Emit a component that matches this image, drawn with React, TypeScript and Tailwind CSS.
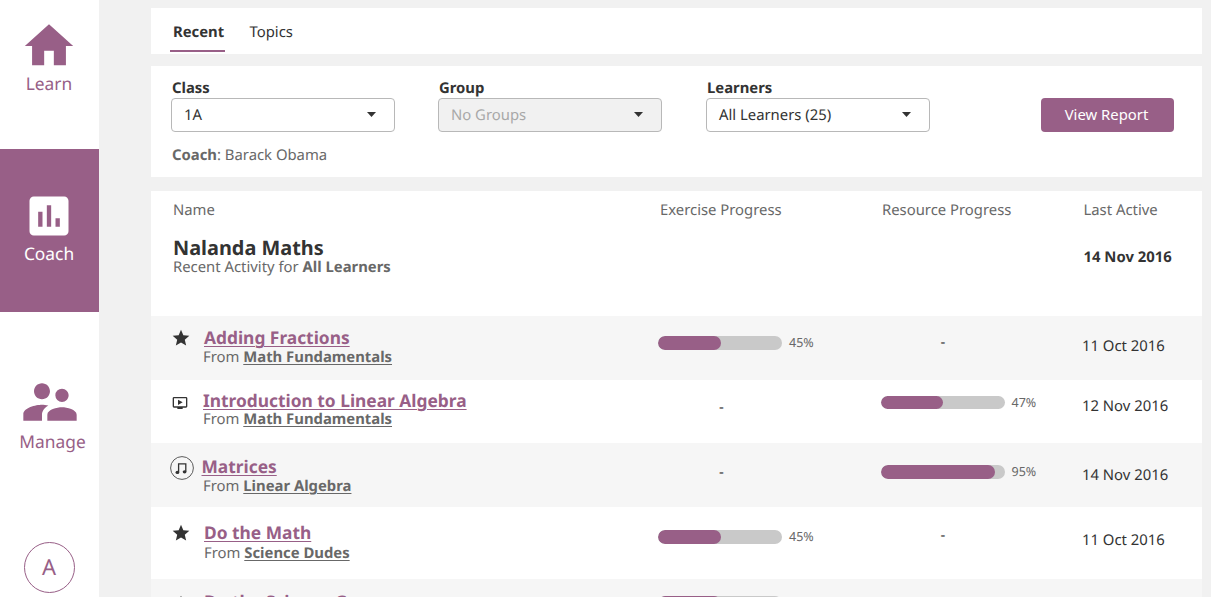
import type { ReactNode } from "react";
import { MdHome, MdAssessment, MdSupervisorAccount, MdStar, MdOndemandVideo } from "react-icons/md";

function Caret() {
  return (
    <svg className="mb-0.5 block h-[5px] w-[9px]" viewBox="0 0 9 5">
      <path d="M0 0h9L4.5 5z" fill="#333333" />
    </svg>
  );
}

function MusicIcon() {
  return (
    <svg className="block size-6" viewBox="0 0 24 24">
      <circle cx="12" cy="12" r="11.4" fill="none" stroke="#4a4a4a" strokeWidth="0.9" />
      <path d="M8.6 16V7.9h7.2v7.6" fill="none" stroke="#333333" strokeWidth="1.3" />
      <ellipse cx="7.4" cy="16.4" rx="1.9" ry="1.6" fill="#333333" />
      <ellipse cx="14.6" cy="15.8" rx="1.9" ry="1.6" fill="#333333" />
    </svg>
  );
}

function Select({ label, value, disabled = false }: { label: string; value: string; disabled?: boolean }) {
  return (
    <div className="w-[224px]">
      <div className="h-5 pl-px text-[14.85px] leading-5 font-bold">{label}</div>
      <div
        className={`flex h-[34px] items-center justify-between rounded-[4px] border border-[#b8b8b8] pr-[18px] pl-3 text-[14.85px] ${
          disabled ? "bg-[#f1f1f1] text-[#a8a8a8]" : "bg-white"
        }`}
      >
        <span className="leading-5">{value}</span>
        <Caret />
      </div>
    </div>
  );
}

function Progress({ value, top, fill }: { value: number; top: string; fill: number }) {
  return (
    <div className={`flex h-3.5 items-center gap-[7px] ${top}`}>
      <div className="h-[13.5px] w-[124px] overflow-hidden rounded-full bg-[#c9c9c9]">
        <div className="h-full rounded-full bg-[#985f87]" style={{ width: fill }} />
      </div>
      <span className="text-[12.5px] leading-3.5 text-[#686868]">{value}%</span>
    </div>
  );
}

function Dash({ top }: { top: string }) {
  return <div className={`w-[124px] pl-px text-center text-[15px] leading-5 ${top}`}>-</div>;
}

type RowProps = {
  className: string;
  icon: ReactNode;
  iconClass: string;
  title: string;
  titleClass: string;
  source: string;
  sourceClass: string;
  exercise: ReactNode;
  resource: ReactNode;
  date: string;
  dateClass: string;
};

function Row(p: RowProps) {
  return (
    <div className={`flex shrink-0 items-start pl-5 ${p.className}`}>
      <div className={`w-8 shrink-0 ${p.iconClass}`}>{p.icon}</div>
      <div className="w-[455px] shrink-0">
        <div className={`h-6 text-[17.35px] leading-6 font-bold text-[#985f87] ${p.titleClass}`}>
          <a className="underline decoration-[1.4px] underline-offset-2">{p.title}</a>
        </div>
        <div className={`h-5 text-[14.85px] leading-5 text-[#686868] ${p.sourceClass}`}>
          From <a className="font-bold underline decoration-[1.3px] underline-offset-2">{p.source}</a>
        </div>
      </div>
      <div className="w-[222.5px] shrink-0">{p.exercise}</div>
      <div className="w-[201.5px] shrink-0">{p.resource}</div>
      <div className={`text-[14.85px] leading-5 whitespace-nowrap ${p.dateClass}`}>{p.date}</div>
    </div>
  );
}

export default function App() {
  return (
    <div className="flex h-[597px] w-[1211px] overflow-hidden bg-[#f1f1f1] font-['Noto_Sans',sans-serif] text-[#333333] [text-rendering:geometricPrecision]">
      <nav className="flex w-[99px] shrink-0 flex-col bg-white text-[17.35px] leading-6 text-[#985f87]">
        <a className="flex h-[149px] flex-col items-center pt-[17px]">
          <MdHome className="-ml-[0.5px] size-[58px] shrink-0" />
          <span className="-mt-[3px] -ml-px">Learn</span>
        </a>
        <a className="flex h-[163px] flex-col items-center bg-[#985f87] pt-[41px] text-white">
          <MdAssessment className="-ml-px size-[52px] shrink-0" />
          <span className="-ml-px">Coach</span>
        </a>
        <a className="flex h-[230px] flex-col items-center pt-[58px]">
          <MdSupervisorAccount className="size-[64px] shrink-0" />
          <span className="-mt-1 pl-[6px]">Manage</span>
        </a>
        <div className="mx-auto flex size-[51px] shrink-0 items-center justify-center rounded-full border border-[#985f87] pr-px pb-0.5 text-[22px]">
          A
        </div>
      </nav>

      <main className="ml-[52px] flex w-[1051px] shrink-0 flex-col">
        <div className="mt-2 flex h-[46px] shrink-0 bg-white pl-[19px] text-[14.85px] leading-5">
          <div className="h-11 w-[55px] border-b-2 border-[#985f87] pt-3.5 pl-[3px] font-bold">Recent</div>
          <div className="pt-3.5 pl-[24.5px]">Topics</div>
        </div>

        <section className="mt-3 h-[111px] shrink-0 bg-white pt-3 pl-5">
          <div className="flex items-end">
            <Select label="Class" value="1A" />
            <div className="w-[43px]" />
            <Select label="Group" value="No Groups" disabled />
            <div className="w-11" />
            <Select label="Learners" value="All Learners (25)" />
            <button className="ml-[111px] h-[34px] w-[133px] rounded-[4px] bg-[#985f87] pr-0.5 pb-0.5 text-[14.85px] leading-5 text-white">
              View Report
            </button>
          </div>
          <div className="mt-[13px] pl-px text-[14.85px] leading-5 text-[#686868]">
            <b>Coach</b>: Barack Obama
          </div>
        </section>

        <section className="mt-3.5 flex flex-1 shrink-0 flex-col bg-white">
          <div className="flex h-[125px] shrink-0 pl-[22px] text-[14.85px] leading-5 text-[#686868]">
            <div className="w-[487px] pt-[9px]">
              <div>Name</div>
              <div className="mt-3.5 h-[23px] text-[19.9px] leading-7 font-bold text-[#333333]">Nalanda Maths</div>
              <div>
                Recent Activity for <b>All Learners</b>
              </div>
            </div>
            <div className="w-[222px] pt-[9px]">Exercise Progress</div>
            <div className="w-[201.5px] pt-[9px]">Resource Progress</div>
            <div className="pt-[9px]">
              <div>Last Active</div>
              <div className="mt-[27px] font-bold text-[#333333]">14 Nov 2016</div>
            </div>
          </div>
          <Row
            className="h-16 bg-[#f6f6f6]"
            icon={<MdStar className="size-5" />}
            iconClass="pt-3"
            title="Adding Fractions"
            titleClass="mt-2.5 indent-[1px]"
            source="Math Fundamentals"
            sourceClass="-mt-[3px]"
            exercise={<Progress value={45} fill={63} top="mt-5" />}
            resource={<Dash top="mt-4" />}
            date="11 Oct 2016"
            dateClass="mt-5"
          />
          <Row
            className="h-[63px] bg-white"
            icon={<MdOndemandVideo className="ml-px size-4" />}
            iconClass="pt-[15px]"
            title="Introduction to Linear Algebra"
            titleClass="mt-[9px]"
            source="Math Fundamentals"
            sourceClass="-mt-1"
            exercise={<Dash top="mt-[17px] ml-px" />}
            resource={<Progress value={47} fill={62} top="mt-[15.5px]" />}
            date="12 Nov 2016"
            dateClass="mt-4"
          />
          <Row
            className="h-16 bg-[#f6f6f6]"
            icon={<MusicIcon />}
            iconClass="-ml-px mr-px pt-[13px]"
            title="Matrices"
            titleClass="mt-3 -indent-[1.5px]"
            source="Linear Algebra"
            sourceClass="-mt-[3px] indent-0"
            exercise={<Dash top="mt-[19px] ml-px" />}
            resource={<Progress value={95} fill={114} top="mt-[22px]" />}
            date="14 Nov 2016"
            dateClass="mt-[22px]"
          />
          <Row
            className="h-[72px] bg-white"
            icon={<MdStar className="size-5" />}
            iconClass="pt-4"
            title="Do the Math"
            titleClass="mt-[14px] indent-[1px]"
            source="Science Dudes"
            sourceClass="-mt-0.5 indent-[1px]"
            exercise={<Progress value={45} fill={63} top="mt-[23px]" />}
            resource={<Dash top="mt-[18px]" />}
            date="11 Oct 2016"
            dateClass="mt-[23px]"
          />
          <Row
            className="h-[72px] bg-[#f6f6f6]"
            icon={<MdStar className="size-5" />}
            iconClass="pt-[15px]"
            title="Do the Science Guy"
            titleClass="mt-[11px] indent-[1px]"
            source="Science Dudes"
            sourceClass="-mt-[1px]"
            exercise={<Progress value={45} fill={63} top="mt-[17px]" />}
            resource={<Dash top="mt-[19px]" />}
            date="11 Oct 2016"
            dateClass="mt-[22px]"
          />
        </section>
      </main>
    </div>
  );
}
